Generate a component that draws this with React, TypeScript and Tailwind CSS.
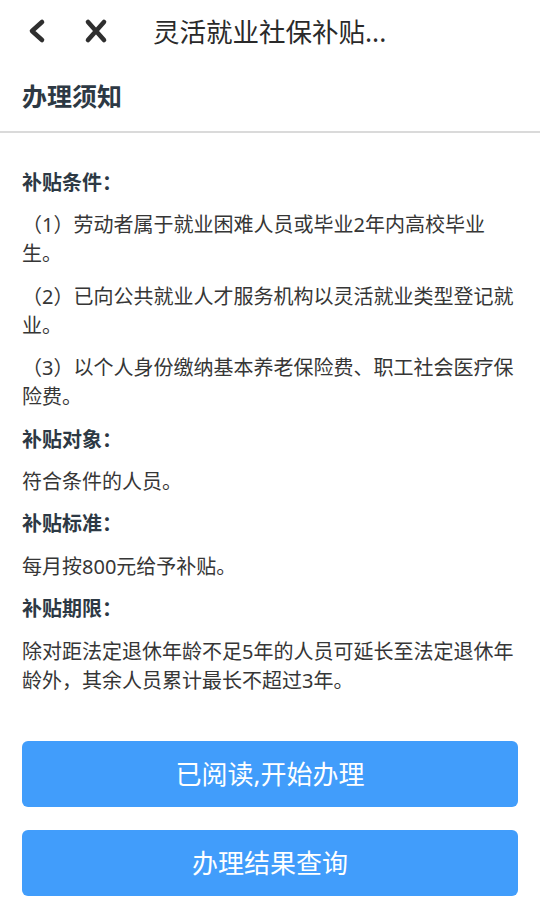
import React from "react";

const sections: { title: string; items: string[] }[] = [
  {
    title: "补贴条件：",
    items: [
      "（1）劳动者属于就业困难人员或毕业2年内高校毕业生。",
      "（2）已向公共就业人才服务机构以灵活就业类型登记就业。",
      "（3）以个人身份缴纳基本养老保险费、职工社会医疗保险费。",
    ],
  },
  { title: "补贴对象：", items: ["符合条件的人员。"] },
  { title: "补贴标准：", items: ["每月按800元给予补贴。"] },
  {
    title: "补贴期限：",
    items: ["除对距法定退休年龄不足5年的人员可延长至法定退休年龄外，其余人员累计最长不超过3年。"],
  },
];

export default function App() {
  return (
    <div
      className="w-[540px] h-[917px] bg-white overflow-hidden text-[#333333]"
      style={{ fontFamily: '"Noto Sans", "Noto Sans CJK SC", sans-serif' }}
    >
      {/* top bar */}
      <div className="h-[62px] flex items-center">
        <svg width="24" height="30" viewBox="0 0 24 30" className="ml-[25px]">
          <path d="M17 6 L7 15 L17 24" fill="none" stroke="#2f2f2f" strokeWidth="4.6" strokeLinecap="round" strokeLinejoin="round" />
        </svg>
        <svg width="30" height="30" viewBox="0 0 30 30" className="ml-[32px]">
          <path d="M7 6 L23 24 M23 6 L7 24" fill="none" stroke="#2f2f2f" strokeWidth="4.6" strokeLinecap="round" />
        </svg>
        <div className="ml-[42px] text-[26.5px] leading-none text-[#2a2a2a] mt-[3px]">灵活就业社保补贴...</div>
      </div>

      {/* section title */}
      <div className="h-[69px] px-[22px] flex items-center">
        <div className="text-[25px] font-bold text-[#2d3944] leading-none">办理须知</div>
      </div>
      <div className="h-[2px] bg-[#dadada]" />

      {/* content */}
      <div className="pt-[35px] px-[22px] flex flex-col gap-[13.4px]">
        {sections.map((s) => (
          <React.Fragment key={s.title}>
            <div className="text-[20px] leading-[29px] font-bold text-[#2d3944]">{s.title}</div>
            {s.items.map((t) => (
              <p key={t} className="text-[20px] leading-[29px] text-[#363636]">
                {t}
              </p>
            ))}
          </React.Fragment>
        ))}
      </div>

      {/* buttons */}
      <div className="pt-[46px] px-[22px] flex flex-col gap-[23px]">
        <button className="h-[66px] w-full rounded-[6px] bg-[#419dfb] text-white text-[26px] leading-none">
          已阅读,开始办理
        </button>
        <button className="h-[66px] w-full rounded-[6px] bg-[#419dfb] text-white text-[26px] leading-none">
          办理结果查询
        </button>
      </div>
    </div>
  );
}
